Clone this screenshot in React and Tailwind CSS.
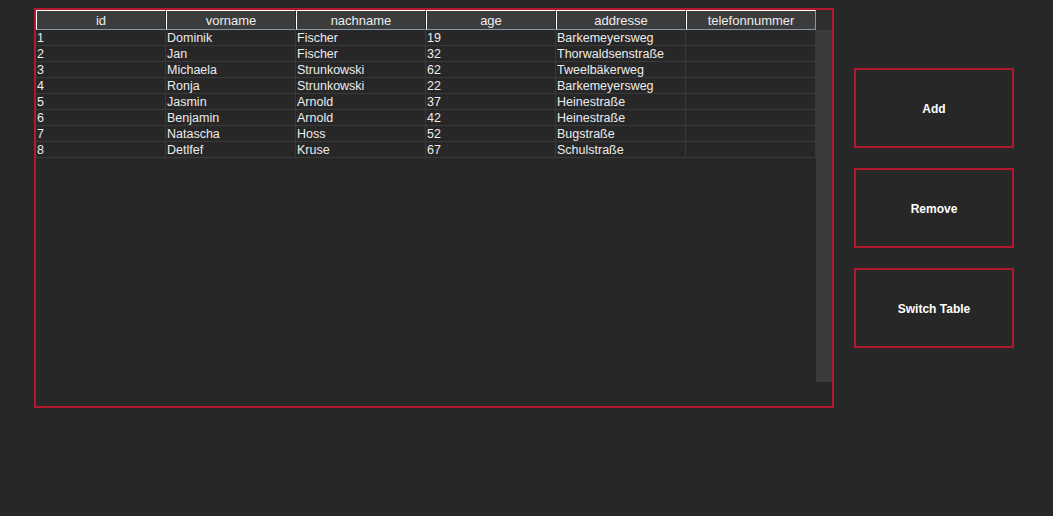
import React from "react";

const cols = ["id", "vorname", "nachname", "age", "addresse", "telefonnummer"];
const rows = [
  ["1", "Dominik", "Fischer", "19", "Barkemeyersweg", ""],
  ["2", "Jan", "Fischer", "32", "Thorwaldsenstraße", ""],
  ["3", "Michaela", "Strunkowski", "62", "Tweelbäkerweg", ""],
  ["4", "Ronja", "Strunkowski", "22", "Barkemeyersweg", ""],
  ["5", "Jasmin", "Arnold", "37", "Heinestraße", ""],
  ["6", "Benjamin", "Arnold", "42", "Heinestraße", ""],
  ["7", "Natascha", "Hoss", "52", "Bugstraße", ""],
  ["8", "Detlfef", "Kruse", "67", "Schulstraße", ""],
];

export default function App() {
  return (
    <div
      className="w-[1053px] h-[516px] bg-[#272727] flex items-start text-[#ececec]"
      style={{ fontFamily: '"Liberation Sans", Arial, sans-serif' }}
    >
      <div className="ml-[34px] mt-[8px] w-[800px] h-[400px] border-2 border-[#b3192e] flex flex-col">
        <div className="flex h-[20px]">
          {cols.map((c, i) => (
            <div
              key={c}
              className={`w-[130px] h-[20px] bg-[#3c3c3c] border-t border-l border-t-white border-l-white border-b border-b-[#8796a6] border-r ${
                i === cols.length - 1 ? "border-r-[#8796a6]" : "border-r-[#2b2b2b]"
              } flex items-center justify-center pt-[1px] text-[13px] leading-none`}
            >
              {c}
            </div>
          ))}
          <div className="w-[16px] h-[20px] bg-[#2e2e2e]" />
        </div>
        <div className="flex">
          <div className="flex flex-col w-[780px]">
            {rows.map((r, ri) => (
              <div key={ri} className="flex h-[16px]">
                {r.map((v, ci) => (
                  <div
                    key={ci}
                    className="w-[130px] h-[16px] border-r border-b border-[#3a3a3a] pl-[1px] text-[12.5px] leading-[17px] whitespace-nowrap overflow-hidden"
                  >
                    {v}
                  </div>
                ))}
              </div>
            ))}
          </div>
          <div className="w-[16px] h-[352px] bg-[#3b3b3b]" />
        </div>
      </div>
      <div className="ml-[20px] mt-[68px] flex flex-col gap-[20px]">
        {["Add", "Remove", "Switch Table"].map((b) => (
          <div
            key={b}
            className="w-[160px] h-[80px] border-2 border-[#b3192e] flex items-center justify-center pt-[2px] text-[12px] font-bold text-white"
          >
            {b}
          </div>
        ))}
      </div>
    </div>
  );
}
